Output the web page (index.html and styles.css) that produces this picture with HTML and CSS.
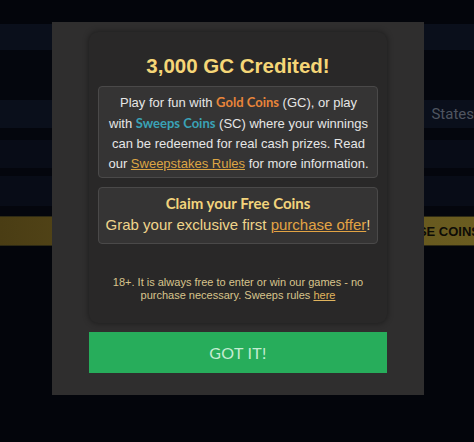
FILE: index.html
```html
<!DOCTYPE html>
<html>
<head>
<meta charset="utf-8">
<link rel="stylesheet" href="styles.css">
</head>
<body>
<div class="page">
  <div class="band b-top"></div>
  <div class="band b-light"></div>
  <div class="band b-dark h48"></div>
  <div class="band b-light b-states"><span class="states">States</span></div>
  <div class="band b-dark h12"></div>
  <div class="band b-mid h28"></div>
  <div class="band b-dark h8"></div>
  <div class="band b-mid h30"></div>
  <div class="band b-dark h10"></div>
  <div class="band b-yellow"><span class="coins">SE COINS</span></div>
</div>

<div class="modal">
  <div class="card">
    <h1 class="title">3,000 GC Credited!</h1>
    <div class="box info">
      Play for fun with <span class="gold">Gold Coins</span> (GC), or play with <span class="sweeps">Sweeps Coins</span> (SC) where your winnings can be redeemed for real cash prizes. Read our <a class="rules">Sweepstakes Rules</a> for more information.
    </div>
    <div class="box claim">
      <div class="claim-title">Claim your Free Coins</div>
      <div class="claim-text">Grab your exclusive first <a class="offer">purchase offer</a>!</div>
    </div>
    <p class="legal">18+. It is always free to enter or win our games - no purchase necessary. Sweeps rules <a class="here">here</a></p>
  </div>
  <button class="got">GOT IT!</button>
</div>
</body>
</html>
```

FILE: styles.css
```css
* { box-sizing: border-box; }
html, body { margin: 0; padding: 0; }
body {
  width: 474px;
  height: 442px;
  overflow: hidden;
  background: #03050b;
  font-family: "Liberation Sans", Arial, sans-serif;
  position: relative;
}
.page { display: flex; flex-direction: column; }
.band { width: 100%; position: relative; }
.b-top { height: 24px; background: #03050b; }
.b-light { height: 26px; background: #0a0f1b; }
.b-dark { background: #04060d; }
.h48 { height: 50px; }
.h12 { height: 12px; }
.h8 { height: 8px; }
.h10 { height: 10px; }
.h28 { height: 28px; }
.h30 { height: 30px; }
.b-mid { background: #080c17; }
.b-states { height: 28px; display: flex; align-items: center; justify-content: flex-end; overflow: hidden; }
.states {
  color: #4f5560;
  font-family: Roboto, "Liberation Sans", sans-serif;
  font-size: 15px;
}
.b-yellow {
  height: 30px;
  background: linear-gradient(90deg, #4a3d14 0%, #5a4b1a 30%, #6a5c20 100%);
  display: flex;
  align-items: center;
  justify-content: flex-end;
  border-top: 1px solid #2e2a14;
  border-bottom: 1px solid #2e2a14;
  overflow: hidden;
}
.coins {
  font-family: "Liberation Sans", Arial, sans-serif;
  font-weight: 700;
  font-size: 13px;
  color: #0d0c06;
  margin-right: -6px;
  white-space: nowrap;
}

.modal {
  position: absolute;
  left: 52px;
  top: 22px;
  width: 372px;
  height: 373px;
  background: #2f2e2e;
  padding: 10px 37px 22px;
  display: flex;
  flex-direction: column;
}
.card {
  height: 291px;
  background: #292828;
  border-radius: 9px;
  box-shadow: 0 0 6px rgba(0, 0, 0, 0.45);
  padding: 20px 9px 0;
  display: flex;
  flex-direction: column;
  text-align: center;
}
.title {
  margin: 0 0 6px;
  font-size: 20.5px;
  line-height: 28px;
  font-weight: 700;
  color: #f5d677;
}
.box {
  background: #353434;
  border: 1px solid #4a4949;
  border-radius: 4px;
}
.info {
  height: 92px;
  padding: 5px 7px 5px 8px;
  font-size: 13px;
  line-height: 20px;
  color: #e6e6e6;
}
.gold {
  color: #e8853a;
  font-weight: 700;
  font-family: Lato, "Liberation Sans", sans-serif;
}
.sweeps {
  color: #3aa2b6;
  font-weight: 700;
  font-family: Lato, "Liberation Sans", sans-serif;
}
.rules {
  color: #dca544;
  text-decoration: underline;
}
.claim {
  margin-top: 9px;
  height: 57px;
  padding: 5px 4px 0;
}
.claim-title {
  font-family: Lato, "Liberation Sans", sans-serif;
  font-weight: 700;
  font-size: 15px;
  line-height: 20px;
  color: #f2d37c;
}
.claim-text {
  font-size: 15px;
  line-height: 24px;
  color: #efd58b;
}
.offer {
  color: #e3a444;
  text-decoration: underline;
}
.legal {
  margin: 32px 0 0;
  font-size: 11px;
  line-height: 13px;
  color: #d8c48c;
  padding: 0 10px;
}
.here { color: #e0b45e; text-decoration: underline; }
.got {
  margin-top: 9px;
  height: 41px;
  width: 100%;
  border: none;
  background: #27ad5b;
  color: #c4ecd2;
  font-family: Lato, "Liberation Sans", sans-serif;
  font-size: 16px;
  font-weight: 400;
  letter-spacing: 0.3px;
  padding: 0;
}
```
